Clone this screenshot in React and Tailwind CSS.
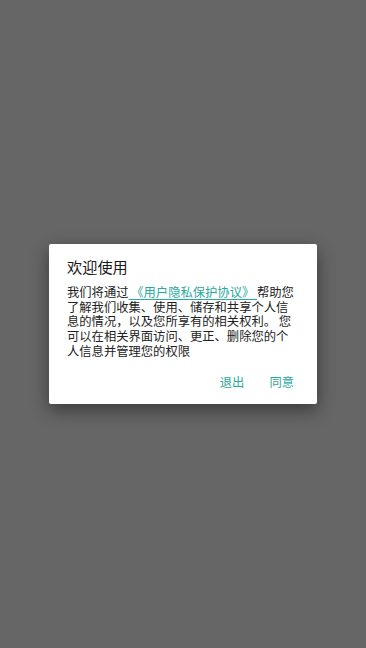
export default function App() {
  const font = { fontFamily: '"Noto Sans CJK SC", "Noto Sans", sans-serif' };
  return (
    <div className="w-full h-[648px] bg-[#666666] flex items-center justify-center" style={font}>
      <div className="w-[268px] h-[160px] bg-white rounded-[2px] shadow-[0_6px_18px_rgba(0,0,0,0.45)] flex flex-col">
        <div className="pl-[18px] pt-[12px] text-[15.2px] leading-[20px] text-[#1a1a1a]">欢迎使用</div>
        <div className="pl-[18px] pr-[16px] mt-[9px] text-[12.3px] leading-[14.7px] text-[#222222] whitespace-nowrap">
          我们将通过<span className="text-[#2aa99a] underline underline-offset-[2px] decoration-[1px]"> 《用户隐私保护协议》 </span>帮助您
          <br />
          了解我们收集、使用、储存和共享个人信
          <br />
          息的情况，以及您所享有的相关权利。 您
          <br />
          可以在相关界面访问、更正、删除您的个
          <br />
          人信息并管理您的权限
        </div>
        <div className="mt-[16px] flex justify-end gap-[25px] pr-[23px] text-[12.3px] leading-[14px] text-[#2aa99a]">
          <span>退出</span>
          <span>同意</span>
        </div>
      </div>
    </div>
  );
}
